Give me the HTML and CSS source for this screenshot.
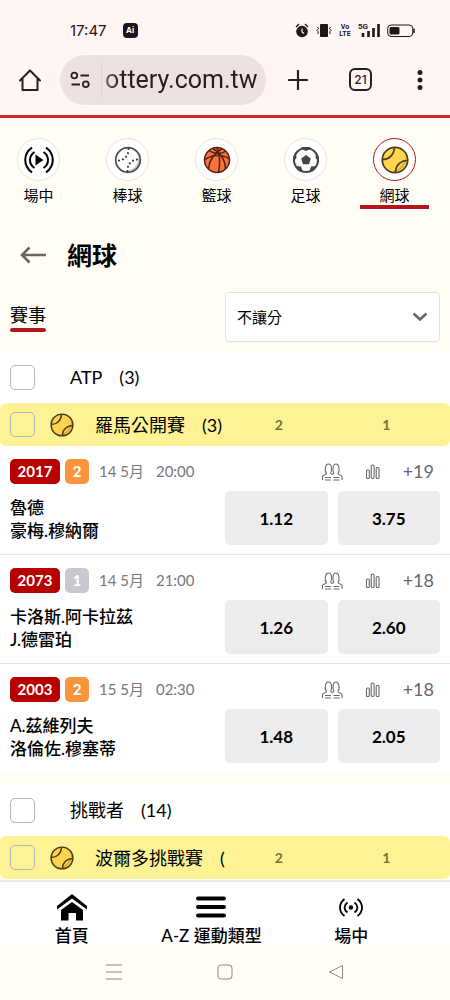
FILE: index.html
```html
<!DOCTYPE html>
<html lang="zh-Hant">
<head>
<meta charset="utf-8">
<meta name="viewport" content="width=device-width, initial-scale=1">
<title>網球</title>
<link rel="stylesheet" href="styles.css">
</head>
<body>
<svg class="defs" aria-hidden="true">
  <symbol id="tennis" viewBox="0 0 28 28">
    <circle cx="14" cy="14" r="12.6" fill="#ffd550"/>
    <path d="M25 8C27 19 20 27 10 26C18 24 24 18 25 8Z" fill="#dcae35"/>
    <g fill="none" stroke="#4a3b18" stroke-width="1.7"><circle cx="14" cy="14" r="12.7"/><path d="M13.5 1.5C13 9 8 13.500 1.500 13.500M14.500 26.500C14.500 19 20 14.500 26.500 14.500"/></g>
  </symbol>
  <symbol id="people" viewBox="0 0 22 18">
    <g fill="none" stroke="currentColor" stroke-width="1.100">
      <path d="M1.500 17V13.500C1.500 12 5.500 12 5.500 10.500C3.500 8.500 3.800 1 7.500 1S11 8 9.700 9.800C9.700 11 11.200 11.500 11.200 11.500S12.800 11 12.800 9.800C11.500 8 11.500 1 15 1S18.800 8.500 17 10.500C17 12 21 12 21 13.500V17"/>
      <path d="M4 14.500H10M12.500 14.500H18.500M4 17H10M12.500 17H18.500"/>
    </g>
  </symbol>
  <symbol id="bars" viewBox="0 0 16 16">
    <g fill="none" stroke="currentColor" stroke-width="1.100"><rect x="1.500" y="6" width="2.800" height="8.500" rx="1"/><rect x="6.200" y="1" width="2.900" height="13.500" rx="1.200"/><rect x="11.200" y="3.500" width="2.800" height="11" rx="1"/></g>
  </symbol>
</svg>

<header class="browser">
  <div class="status">
    <time class="clock">17:47</time>
    <span class="ai">Ai</span>
    <div class="status-icons">
      <svg width="14" height="15" viewBox="0 0 14 15"><circle cx="7" cy="8.500" r="5.800" fill="#1d1718"/><path d="M1 4L4 1M13 4L10 1" stroke="#1d1718" stroke-width="1.400"/><path d="M7 5.500V9L9 10.500" fill="none" stroke="#fff5f5" stroke-width="1.200"/></svg>
      <svg width="16" height="15" viewBox="0 0 16 15"><rect x="4" y="1" width="8" height="13" rx="1" fill="#1d1718"/><path d="M1.500 4L2.500 5.500L1 7.500L2.500 9L1.500 11M14.500 4L13.500 5.500L15 7.500L13.500 9L14.500 11" fill="none" stroke="#1d1718"/></svg>
      <span class="volte"><span>Vo</span><span>LTE</span></span>
      <span class="signal"><span class="five">5G</span>
        <svg width="20" height="15" viewBox="0 0 20 15"><path d="M3 10V14M8.500 8V14M13.500 5V14M18.500 1V14" stroke="#1d1718" stroke-width="2.600"/></svg></span>
      <svg width="28" height="14" viewBox="0 0 28 14"><rect x=".7" y="1" width="25" height="11.500" rx="3.500" fill="none" stroke="#1d1718"/><rect x="2.500" y="3" width="10" height="7.500" rx="1.500" fill="#1d1718"/><path d="M27 4.500V9" stroke="#1d1718" stroke-width="1.500"/></svg>
    </div>
  </div>
  <div class="toolbar">
    <button class="tool" type="button" aria-label="Home"><svg width="24" height="24" viewBox="0 0 24 24"><path d="M4.500 11V22H19.500V11M2 12.500L12 2.500L22 12.500" fill="none" stroke="#291d1e" stroke-width="2" stroke-linejoin="round" stroke-linecap="round"/></svg></button>
    <label class="address">
      <svg width="21" height="18" viewBox="0 0 21 18"><g fill="none" stroke="#291d1e" stroke-width="1.800"><circle cx="4.300" cy="4.500" r="2.900"/><path d="M10.500 4.500H19M1.500 13.500H10"/><circle cx="15.800" cy="13.300" r="2.900"/></g></svg>
      <input type="text" value="ottery.com.tw" aria-label="URL">
    </label>
    <button class="tool" type="button" aria-label="New tab"><svg width="20" height="20" viewBox="0 0 20 20"><path d="M10 1V19M1 10H19" stroke="#291d1e" stroke-width="2.200" stroke-linecap="round"/></svg></button>
    <button class="tabs" type="button">21</button>
    <button class="tool" type="button" aria-label="Menu"><svg width="6" height="20" viewBox="0 0 6 20"><g fill="#291d1e"><circle cx="3" cy="2.500" r="2.500"/><circle cx="3" cy="10" r="2.500"/><circle cx="3" cy="17.500" r="2.500"/></g></svg></button>
  </div>
</header>

<main class="page">
  <nav class="sports">
    <a class="sport" href="#"><span class="disc"><svg width="30" height="28" viewBox="0 0 30 28"><path d="M11.500 8.500V19.500L19.500 14Z"/><path d="M8 1.500C-1 8 -1 20 8 26.500M22 1.500C31 8 31 20 22 26.500M10.500 6C4.500 10 4.500 18 10.500 22M19.500 6C25.500 10 25.500 18 19.500 22" fill="none" stroke="#000" stroke-width="2"/></svg></span>場中</a>
    <a class="sport" href="#"><span class="disc"><svg width="28" height="28" viewBox="0 0 28 28"><circle cx="14" cy="14" r="12.300" fill="#fff"/><path d="M24 8C26 19 19 25 10 25C19 28 27 22 26 14Z" fill="#ccc"/><circle cx="14" cy="14" r="12.300" fill="none" stroke="#4c4c4c" stroke-width="1.700"/><path d="M14.500 3C15 9 10 15 3.500 14.500M13.500 25C13 18.500 18 13 25 13.500" fill="none" stroke="#333" stroke-width="2" stroke-linecap="round" stroke-dasharray=".1 4"/></svg></span>棒球</a>
    <a class="sport" href="#"><span class="disc"><svg width="28" height="28" viewBox="0 0 28 28"><circle cx="14" cy="14" r="12.500" fill="#f8743d"/><g fill="none" stroke="#542014" stroke-width="1.500"><circle cx="14" cy="14" r="12.500"/><path d="M6 4.500C11 8.500 19 8 23 5M14 1.500C17 9 17 19 15.500 26.500M1.500 14C9 8 20 8.500 26.500 13M5.500 23.500C6 15 10 8 19 2.500M22.500 23C22.500 16 19 8 10 2.500"/></g></svg></span>籃球</a>
    <a class="sport" href="#"><span class="disc"><svg width="28" height="28" viewBox="0 0 28 28"><circle cx="14" cy="14" r="12" fill="#fff" stroke="#454547" stroke-width="2"/><g fill="#454547"><path d="M14 9L18.800 12.500L17 18.200H11L9.200 12.500ZM8 2.500L14 5L20 2.500L17 1H11ZM24 6L23.500 12L27 16V11ZM4 6L4.500 12L1 16V11ZM25 20L19 20.500L17 26.500L21 25ZM3 20L9 20.500L11 26.500L7 25Z"/></g></svg></span>足球</a>
    <a class="sport active" href="#" aria-current="page"><span class="disc"><svg width="28" height="28"><use href="#tennis"/></svg></span>網球</a>
  </nav>

  <div class="heading">
    <button class="back" type="button" aria-label="返回"><svg width="27" height="18" viewBox="0 0 27 18"><path d="M26 9H2M9.500 1.500L2 9L9.500 16.500" fill="none" stroke="#696561" stroke-width="2.600"/></svg></button>
    <h1>網球</h1>
  </div>

  <div class="filters">
    <div><a class="tab" href="#">賽事</a></div>
    <div class="picker">
      <select aria-label="玩法"><option>不讓分</option></select>
      <svg class="chevron" width="16" height="10" viewBox="0 0 16 10"><path d="M1.500 1.500L8 7.500L14.500 1.500" fill="none" stroke="#666" stroke-width="2.600"/></svg>
    </div>
  </div>

  <section class="group">
    <label class="group-head"><input class="check" type="checkbox"><span>ATP</span><span>(3)</span></label>
    <div class="league">
      <label class="league-name"><input class="check" type="checkbox"><svg width="24" height="24"><use href="#tennis"/></svg><span class="title"><span>羅馬公開賽</span><span>(3)</span></span></label>
      <div class="cols"><span>2</span><span>1</span></div>
    </div>
    <article class="match">
      <div class="meta"><span class="code">2017</span><span class="count">2</span><span class="date">14 5月</span><time>20:00</time></div>
      <div class="extras"><svg width="22" height="18"><use href="#people"/></svg><svg width="16" height="16"><use href="#bars"/></svg><a href="#">+19</a></div>
      <div class="names">魯德<br>豪梅.穆納爾</div>
      <div class="odds"><button type="button">1.12</button><button type="button">3.75</button></div>
    </article>
    <article class="match">
      <div class="meta"><span class="code">2073</span><span class="count muted">1</span><span class="date">14 5月</span><time>21:00</time></div>
      <div class="extras"><svg width="22" height="18"><use href="#people"/></svg><svg width="16" height="16"><use href="#bars"/></svg><a href="#">+18</a></div>
      <div class="names">卡洛斯.阿卡拉茲<br>J.德雷珀</div>
      <div class="odds"><button type="button">1.26</button><button type="button">2.60</button></div>
    </article>
    <article class="match">
      <div class="meta"><span class="code">2003</span><span class="count">2</span><span class="date">15 5月</span><time>02:30</time></div>
      <div class="extras"><svg width="22" height="18"><use href="#people"/></svg><svg width="16" height="16"><use href="#bars"/></svg><a href="#">+18</a></div>
      <div class="names">A.茲維列夫<br>洛倫佐.穆塞蒂</div>
      <div class="odds"><button type="button">1.48</button><button type="button">2.05</button></div>
    </article>
  </section>

  <section class="group">
    <label class="group-head"><input class="check" type="checkbox"><span>挑戰者</span><span>(14)</span></label>
    <div class="league">
      <label class="league-name"><input class="check" type="checkbox"><svg width="24" height="24"><use href="#tennis"/></svg><span class="title"><span>波爾多挑戰賽</span><span>(</span></span></label>
      <div class="cols"><span>2</span><span>1</span></div>
    </div>
  </section>
</main>

<nav class="bottom">
  <a href="#"><svg width="32" height="28" viewBox="0 0 32 28"><path d="M1 13V16.500L16 5.500L31 16.500V13L16 1Z"/><path d="M5 17L16 9L27 17V27.500H20V20H12.500V27.500H5Z"/></svg>首頁</a>
  <a href="#"><svg width="32" height="28" viewBox="0 0 32 28"><path d="M3 5.500H29M3 14H29M3 22.500H29" stroke="#000" stroke-width="4" stroke-linecap="round"/></svg>A-Z 運動類型</a>
  <a href="#"><svg width="24" height="28" viewBox="0 0 24 28"><circle cx="12" cy="14.500" r="2.200"/><path d="M5.500 6C-.5 10.500 -.5 18.500 5.500 23M18.500 6C24.500 10.500 24.500 18.500 18.500 23M8.500 9.500C4.500 12.500 4.500 16.500 8.500 19.500M15.500 9.500C19.500 12.500 19.500 16.500 15.500 19.500" fill="none" stroke="#000" stroke-width="1.800"/></svg>場中</a>
</nav>

<footer class="system">
  <button type="button" aria-label="Recent"><svg width="16" height="16" viewBox="0 0 16 16"><path d="M0 1H16M0 8H16M0 15H16" stroke="#8f8b84"/></svg></button>
  <button type="button" aria-label="Home"><svg width="16" height="16" viewBox="0 0 16 16"><rect x="1" y="1" width="14" height="14" rx="3" fill="none" stroke="#8f8b84"/></svg></button>
  <button type="button" aria-label="Back"><svg width="16" height="16" viewBox="0 0 16 16"><path d="M14.500 1.500V14.500L1.500 8Z" fill="none" stroke="#8f8b84" stroke-linejoin="round"/></svg></button>
</footer>
</body>
</html>
```
FILE: styles.css
```css
* { box-sizing: border-box; }
body {
  margin: 0;
  min-height: 100vh;
  display: flex;
  flex-direction: column;
  background: #fffdf4;
  color: #000;
  font-family: Lato, "Noto Sans CJK TC", sans-serif;
}
button { border: 0; padding: 0; background: none; color: inherit; font: inherit; }
a { color: inherit; text-decoration: none; }
svg { display: block; flex: none; }
.defs { position: absolute; width: 0; height: 0; }

/* Browser chrome */
.browser {
  background: #fff5f4;
  border-bottom: 3px solid #d12a23;
  font-family: Roboto, sans-serif;
}
.status {
  display: flex;
  align-items: center;
  height: 54px;
  padding: 7px 35px 0 70px;
  color: #1d1718;
}
.clock { font: 15px/20px Inter, sans-serif; }
.ai {
  width: 15px;
  margin-left: 16px;
  border-radius: 4px;
  background: #1d1718;
  color: #fff;
  font: bold 8px/15px Inter, sans-serif;
  text-align: center;
}
.status-icons { display: flex; align-items: center; gap: 7px; margin-left: auto; }
.volte { display: grid; width: 12px; font: bold 7px/7px Roboto, sans-serif; text-align: center; justify-content: center; }
.signal { display: flex; position: relative; padding-left: 2px; }
.five { position: absolute; left: 0; top: 0; font: bold 8px/8px Roboto, sans-serif; }
.toolbar { display: flex; align-items: center; height: 61px; padding: 0 27px 10px 18px; }
.tool { display: flex; }
.tool:last-child { margin-left: 45px; }
.address {
  display: flex;
  flex: 1;
  align-items: center;
  gap: 10px;
  min-width: 0;
  height: 50px;
  margin: 0 22px 0 18px;
  padding: 0 4px 0 10px;
  border-radius: 25px;
  background: #efe1e2;
}
.address input {
  flex: 1;
  width: 0;
  min-width: 0;
  padding: 0 0 0 3px;
  border: 0;
  border-left: 1px solid #d5c7c8;
  background: none;
  color: #291d1e;
  font: 25px/34px Roboto, sans-serif;
  mask-image: linear-gradient(to right, rgb(0 0 0 / 50%), #000 20px);
}
.tabs {
  width: 23px;
  height: 23px;
  margin-left: 41px;
  border: 2px solid #291d1e;
  border-radius: 6px;
  color: #291d1e;
  font: 500 12px/18px Inter, sans-serif;
}

/* Sports */
.page { border-top: 3px solid #fff8fa; }
.sports {
  display: grid;
  grid-template-columns: repeat(5, 1fr);
  gap: 20px;
  padding: 17px 21px 0 4px;
}
.sport {
  display: grid;
  justify-items: center;
  gap: 4px;
  border-bottom: 4px solid transparent;
  font-size: 15px;
  line-height: 20px;
}
.sport.active { border-color: #b3151c; }
.disc {
  display: grid;
  place-items: center;
  width: 43px;
  height: 43px;
  border: 1px solid #e6e4e1;
  border-radius: 50%;
  background: #fff;
}
.active .disc { border-color: #b3151c; }

.heading { display: flex; align-items: center; gap: 20px; height: 83px; padding: 8px 20px 0; }
h1 { margin: 0; font-size: 25px; line-height: 36px; font-weight: 700; }

.filters {
  display: grid;
  grid-template-columns: 1fr 1fr;
  align-items: center;
  padding: 0 10px 9px;
}
.tab { display: inline-block; font-size: 18px; line-height: 26px; padding-bottom: 1px; }
.tab::after { content: ""; display: block; height: 4px; border-radius: 2px; background: #b3151c; }
.picker { display: grid; align-items: center; }
.picker > * { grid-area: 1 / 1; }
.picker select {
  appearance: none;
  width: 100%;
  height: 50px;
  padding: 0 36px 0 11px;
  border: 1px solid #e2e0e3;
  border-radius: 4px;
  background: #fff;
  color: #000;
  font: 15px Lato, "Noto Sans CJK TC", sans-serif;
}
.chevron { justify-self: end; margin-right: 12px; pointer-events: none; }

/* Events */
.group { background: #fff; }
.group + .group { border-top: 11px solid #fffdf4; }
.check {
  appearance: none;
  flex: none;
  width: 25px;
  height: 25px;
  margin: 0;
  border: 1px solid #b5b4b6;
  border-radius: 5px;
}
.group-head { display: flex; align-items: center; gap: 17px; height: 52px; padding: 0 10px; font-size: 18px; line-height: 26px; }
.group-head .check { margin-right: 18px; }
.league {
  display: grid;
  grid-template-columns: 1fr 1fr;
  align-items: center;
  height: 43px;
  padding: 0 10px;
  border-radius: 6px;
  background: #fdf395;
}
.league-name { display: flex; align-items: center; min-width: 0; }
.league-name svg { margin: 0 21px 0 15px; }
.title { display: flex; gap: 17px; overflow: hidden; white-space: nowrap; font-size: 18px; line-height: 26px; }
.cols { display: grid; grid-template-columns: 1fr 1fr; color: #75702f; font-size: 14px; font-weight: 700; text-align: center; }

.match {
  display: grid;
  grid-template-columns: 1fr 1fr;
  row-gap: 7px;
  padding: 13px 10px 9px;
}
.match + .match { border-top: 1px solid #e3e3e3; }
.match:last-child { padding-bottom: 10px; }
.meta { display: flex; align-items: center; gap: 5px; height: 25px; color: #77777a; font-size: 15px; line-height: 25px; white-space: nowrap; }
.code, .count { height: 25px; border-radius: 5px; color: #fff; font-weight: 700; text-align: center; }
.code { width: 50px; background: #b80000; }
.count { width: 24px; background: #fb943c; }
.count.muted { background: #c8c8ce; }
.date { height: 25px; margin: 0 7px 0 5px; }
.extras { display: flex; align-items: center; justify-content: flex-end; gap: 22px; padding-right: 6px; color: #68686b; font-size: 18px; line-height: 25px; }
.names { padding-top: 5px; font-size: 17px; line-height: 23px; font-weight: 500; }
.odds { display: grid; grid-template-columns: 1fr 1fr; gap: 10px; }
.odds button { height: 54px; border-radius: 5px; background: #ececec; font-size: 17px; font-weight: 700; }

/* Bottom navigation */
.bottom {
  display: grid;
  grid-template-columns: repeat(3, 1fr);
  flex: none;
  margin-top: auto;
  padding: 11px 29px 0 2px;
  border-top: 2px solid #ebebed;
  background: #fff;
}
.bottom a { display: grid; justify-items: center; gap: 6px; font-size: 17px; line-height: 17px; font-weight: 500; white-space: nowrap; }
.system { display: flex; justify-content: center; gap: 95px; padding: 20px 0; }
```
